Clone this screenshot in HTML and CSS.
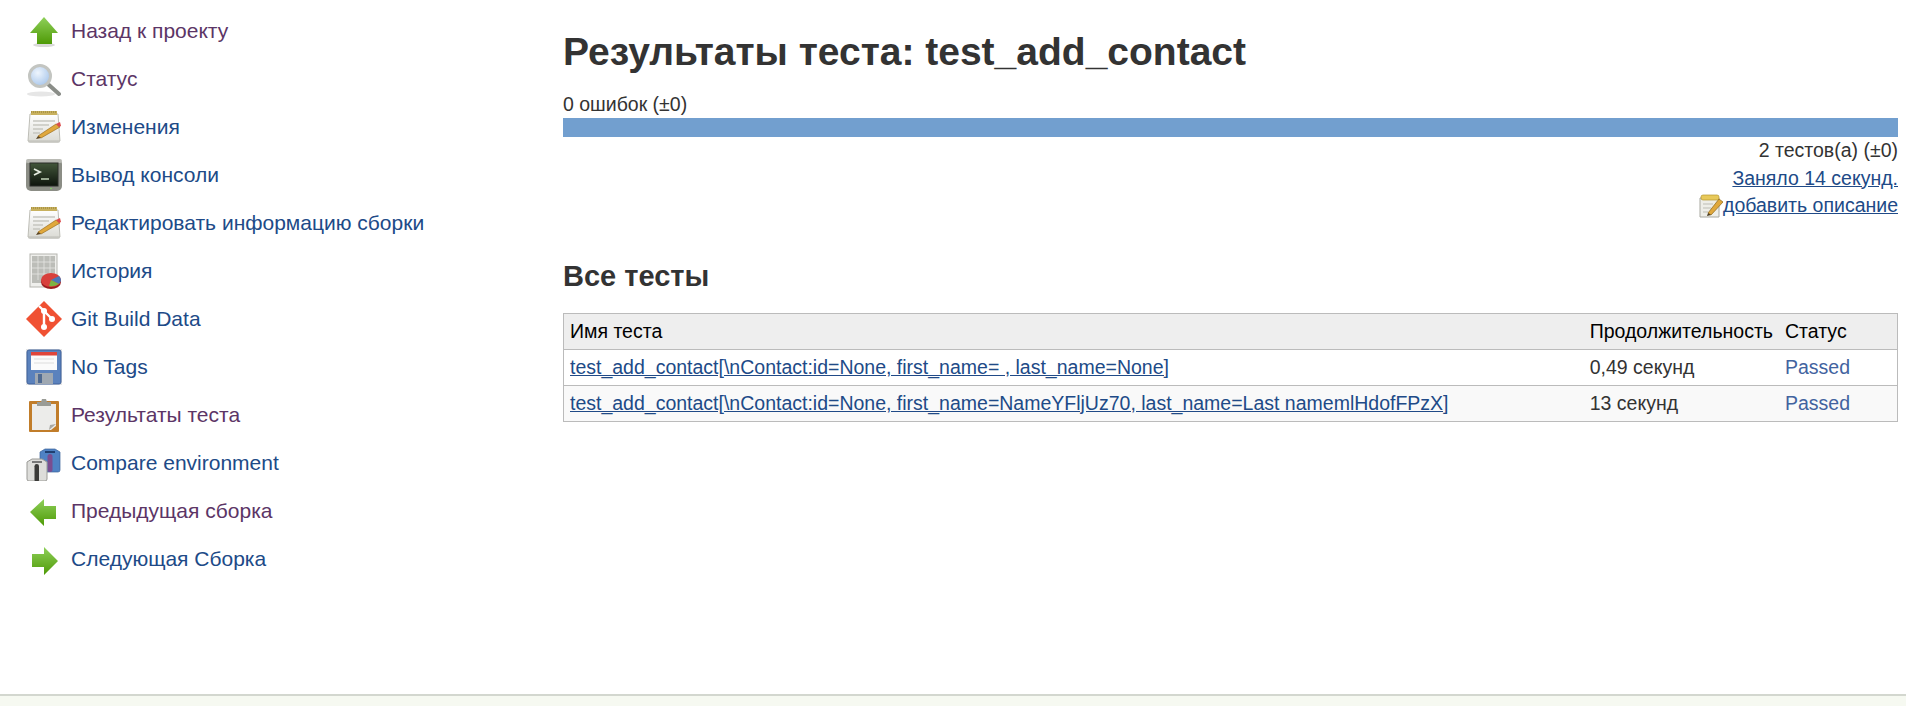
FILE: index.html
```html
<!DOCTYPE html>
<html lang="ru">
<head>
    <meta charset="UTF-8">
    <title>Результаты теста: test_add_contact</title>
    <link rel="stylesheet" href="styles.css">
</head>
<body>

    <svg class="defs" width="0" height="0">
        <defs>
            <linearGradient id="green" x1="0" y1="0" x2="0" y2="1">
                <stop offset="0" stop-color="#8fd05a"/>
                <stop offset="1" stop-color="#4e9a06"/>
            </linearGradient>
            <linearGradient id="paper" x1="0" y1="0" x2="0" y2="1">
                <stop offset="0" stop-color="#ffffff"/>
                <stop offset="1" stop-color="#dcdcd6"/>
            </linearGradient>
            <linearGradient id="screen" x1="0" y1="0" x2="0" y2="1">
                <stop offset="0" stop-color="#42563a"/>
                <stop offset="1" stop-color="#0e140c"/>
            </linearGradient>
            <radialGradient id="lens" cx="0.4" cy="0.35" r="0.7">
                <stop offset="0" stop-color="#eef5fd"/>
                <stop offset="1" stop-color="#a5c4ea"/>
            </radialGradient>
            <symbol id="i-notes" viewBox="0 0 36 36">
                <rect x="2" y="29" width="32" height="5" rx="2" fill="#cfcfca"/>
                <path d="M4 5h28l2 27H2z" fill="url(#paper)" stroke="#bdbdb6"/>
                <rect x="5" y="2" width="26" height="4" fill="#c8b15e"/>
                <path d="M5 3h26" stroke="#8f7a33" stroke-width="1" stroke-dasharray="1 1"/>
                <path d="M7 12h22M7 16h16M7 20h10M7 24h7" stroke="#c6c6c0" stroke-width="1.5"/>
                <path d="M12 27 L30 15 L34 18 L15 29z" fill="#e0a83c" stroke="#9c6f1c" stroke-width=".7"/>
                <path d="M30 15l4-2 1 4-2 1z" fill="#dc4b4b"/>
                <path d="M12 27l3 2-5 1z" fill="#5a4320"/>
            </symbol>
        </defs>
    </svg>

    <div class="page">

        <div class="sidebar">

            <a class="task visited" href="#">
                <svg class="task_icon" viewBox="0 0 36 36">
                    <ellipse cx="18" cy="32" rx="11" ry="2" fill="#d9d9d9"/>
                    <path d="M18 4 L32 20 H26 V31 H11 V20 H4z" fill="url(#green)"/>
                </svg>
                Назад к проекту
            </a>
            <a class="task visited" href="#">
                <svg class="task_icon" viewBox="0 0 36 36">
                    <ellipse cx="15" cy="33" rx="14" ry="2.5" fill="#e6e6e6"/>
                    <path d="M23 24 L33 33" stroke="#8a8d88" stroke-width="4" stroke-linecap="round"/>
                    <circle cx="14" cy="15" r="10.5" fill="url(#lens)" stroke="#c3c5c1" stroke-width="3"/>
                </svg>
                Статус
            </a>
            <a class="task" href="#">
                <svg class="task_icon"><use href="#i-notes"/></svg>
                Изменения
            </a>
            <a class="task" href="#">
                <svg class="task_icon" viewBox="0 0 36 36">
                    <rect x="0" y="2" width="36" height="32" rx="5" fill="#8b8d85"/>
                    <rect x="0" y="2" width="36" height="4" rx="2" fill="#b9bab4"/>
                    <rect x="4" y="6" width="28" height="23" fill="url(#screen)" stroke="#2b2d28"/>
                    <path d="M8 12l6 3-6 3" fill="none" stroke="#e8eee2" stroke-width="1.8"/>
                    <path d="M15 22h8" stroke="#a8b8a0" stroke-width="1.8"/>
                    <circle cx="25" cy="31.5" r=".8" fill="#7ee05a"/>
                </svg>
                Вывод консоли
            </a>
            <a class="task" href="#">
                <svg class="task_icon"><use href="#i-notes"/></svg>
                Редактировать информацию сборки
            </a>
            <a class="task" href="#">
                <svg class="task_icon" viewBox="0 0 36 36">
                    <rect x="4" y="1" width="27" height="33" fill="#efefec" stroke="#b5b5b0"/>
                    <path d="M6 3h23v27H6z" fill="#bcbdb8"/>
                    <path d="M6 9h23M6 15h23M6 21h23M12 3v24M18 3v24M24 3v24" stroke="#e6e6e3" stroke-width=".8"/>
                    <ellipse cx="25" cy="29" rx="10" ry="7" fill="#9c1d1d"/>
                    <ellipse cx="25" cy="27" rx="10" ry="7" fill="#d8403c"/>
                    <path d="M25 27 L33 23 Q37 27 33 31z" fill="#4a78b8"/>
                    <path d="M25 27 L33 31 Q28 34 23 33z" fill="#7cb342"/>
                </svg>
                История
            </a>
            <a class="task" href="#">
                <svg class="task_icon" viewBox="0 0 36 36">
                    <path d="M18 0 L36 18 L18 36 L0 18z" fill="#f05133"/>
                    <path d="M13 5 L18 10 V26 M18 10 L26 18" fill="none" stroke="#fff" stroke-width="2.4"/>
                    <circle cx="18" cy="10" r="3" fill="#fff"/>
                    <circle cx="18" cy="26" r="3" fill="#fff"/>
                    <circle cx="26" cy="18" r="3" fill="#fff"/>
                </svg>
                Git Build Data
            </a>
            <a class="task" href="#">
                <svg class="task_icon" viewBox="0 0 36 36">
                    <rect x="0" y="0" width="36" height="36" fill="#e4e4e4"/>
                    <rect x="1" y="1" width="34" height="34" rx="2" fill="#5b82bd" stroke="#3f619a"/>
                    <rect x="5" y="3" width="26" height="18" fill="#fbfbfb"/>
                    <rect x="5" y="3" width="26" height="3.5" fill="#e0453a"/>
                    <path d="M8 10h20M8 14h20" stroke="#dddddd"/>
                    <rect x="9" y="24" width="18" height="11" fill="#9fa8b2"/>
                    <rect x="12" y="25" width="4" height="9" fill="#4f6a92"/>
                </svg>
                No Tags
            </a>
            <a class="task visited" href="#">
                <svg class="task_icon" viewBox="0 0 36 36">
                    <rect x="3" y="4" width="30" height="31" rx="1" fill="#c17d2a"/>
                    <path d="M6 7h24v22l-5 4H6z" fill="#ececea"/>
                    <path d="M30 27l-6 1-1 5z" fill="#a8a8a4"/>
                    <path d="M11 9V5h4l1-3h4l1 3h4v4z" fill="#9a9c96"/>
                </svg>
                Результаты теста
            </a>
            <a class="task" href="#">
                <svg class="task_icon" viewBox="0 0 36 36">
                    <path d="M14 7l5-3h10l5 3v18a2 2 0 0 1-2 2H16a2 2 0 0 1-2-2z" fill="#4f82c4" stroke="#3a6299" stroke-width=".7"/>
                    <rect x="19" y="6" width="10" height="2" fill="#1f3f70"/>
                    <rect x="21.5" y="9" width="5" height="18" rx="2.5" fill="#7a4d90"/>
                    <path d="M1 17l5-3h10l5 3v17a2 2 0 0 1-2 2H3a2 2 0 0 1-2-2z" fill="#ddddda" stroke="#9a9a96"/>
                    <rect x="6" y="16" width="10" height="2" fill="#777"/>
                    <rect x="8.5" y="19" width="4.5" height="18" rx="2.2" fill="#3a3a38"/>
                </svg>
                Compare environment
            </a>
            <a class="task visited" href="#">
                <svg class="task_icon" viewBox="0 0 36 36">
                    <path d="M4 19 L18 6 V13 H30 V26 H18 V33z" fill="url(#green)"/>
                </svg>
                Предыдущая сборка
            </a>
            <a class="task" href="#">
                <svg class="task_icon" viewBox="0 0 36 36">
                    <path d="M32 20 L18 6 V13 H6 V26 H18 V34z" fill="url(#green)"/>
                </svg>
                Следующая Сборка
            </a>

        </div>

        <div class="main">

            <h1 class="title">Результаты теста: test_add_contact</h1>

            <div class="fail_count">0 ошибок (±0)</div>
            <div class="progress_bar"></div>

            <div class="summary">
                <div>2 тестов(а) (±0)</div>
                <div><a href="#">Заняло 14 секунд.</a></div>
                <div class="add_description">
                    <svg class="note_icon" viewBox="0 0 24 24">
                        <path d="M1 4h19v19H1z" fill="#eeeee8" stroke="#a8a8a0"/>
                        <rect x="2" y="1" width="18" height="5" rx="2" fill="#e8c95a" stroke="#b5962e" stroke-width=".7"/>
                        <path d="M4 10h10M4 14h8M4 18h5" stroke="#bdbdb5"/>
                        <path d="M9 19 L20 5 L24 8 L12 21z" fill="#e0a83c" stroke="#8a6418" stroke-width=".7"/>
                        <path d="M9 19l3 2-4 1z" fill="#4a3a1c"/>
                    </svg><a href="#">добавить описание</a>
                </div>
            </div>

            <h2 class="all_tests">Все тесты</h2>

            <table class="results">
                <thead>
                    <tr>
                        <th>Имя теста</th>
                        <th class="col_time">Продолжительность</th>
                        <th class="col_status">Статус</th>
                    </tr>
                </thead>
                <tbody>
                    <tr>
                        <td><a href="#">test_add_contact[\nContact:id=None, first_name= , last_name=None]</a></td>
                        <td>0,49 секунд</td>
                        <td class="passed">Passed</td>
                    </tr>
                    <tr class="even">
                        <td><a href="#">test_add_contact[\nContact:id=None, first_name=NameYFljUz70, last_name=Last namemlHdofFPzX]</a></td>
                        <td>13 секунд</td>
                        <td class="passed">Passed</td>
                    </tr>
                </tbody>
            </table>

        </div>

    </div>

    <div class="footer"></div>

</body>
</html>
```
FILE: styles.css
```css
html, body{
    height: 100%;
}

body{
    margin: 0;
    display: flex;
    flex-direction: column;
    overflow: hidden;
    background-color: white;
    color: #333;
    font-family: "Liberation Sans", Arial, sans-serif;
    font-size: 19.5px;
}

a{
    color: #204a87;
}

.defs{
    position: absolute;
}

.page{
    flex: 1;
    display: flex;
}

.sidebar{
    width: 563px;
    flex-shrink: 0;
    padding: 7px 0 0 26px;
    box-sizing: border-box;
    font-size: 21px;
}

.task{
    display: flex;
    align-items: center;
    gap: 9px;
    height: 48px;
    text-decoration: none;
}

.task.visited{
    color: #5c3566;
}

.task_icon{
    width: 36px;
    height: 36px;
    flex-shrink: 0;
    filter: blur(0.4px);
}

.main{
    flex: 1;
    margin-right: 8px;
}

.title{
    margin: 30px 0 0 0;
    font-size: 39px;
    line-height: 44px;
    font-weight: bold;
}

.fail_count{
    margin-top: 17px;
    line-height: 27px;
    height: 27px;
}

.progress_bar{
    height: 19px;
    background-color: #729fcf;
}

.summary{
    text-align: right;
    line-height: 27.5px;
}

.add_description{
    display: flex;
    justify-content: flex-end;
    align-items: center;
}

.note_icon{
    width: 24px;
    height: 24px;
    filter: blur(0.3px);
}

.all_tests{
    margin: 39px 0 0 0;
    font-size: 29px;
    line-height: 34px;
    font-weight: bold;
}

.results{
    width: 100%;
    margin-top: 20px;
    border-collapse: collapse;
    border: 1px solid #bbb;
    line-height: 25px;
}

.results th{
    padding: 5px 6px;
    font-weight: normal;
    text-align: left;
    color: black;
    background-color: #eee;
}

.results td{
    padding: 5px 6px;
    border-top: 1px solid #bbb;
}

.col_time{
    width: 183px;
}

.col_status{
    width: 106px;
}

.even td{
    background-color: #f9f9f9;
}

.passed{
    color: #42639f;
}

.footer{
    height: 10px;
    flex-shrink: 0;
    border-top: 2px solid #d3d7cf;
    background-color: #f6f9f1;
}
```
